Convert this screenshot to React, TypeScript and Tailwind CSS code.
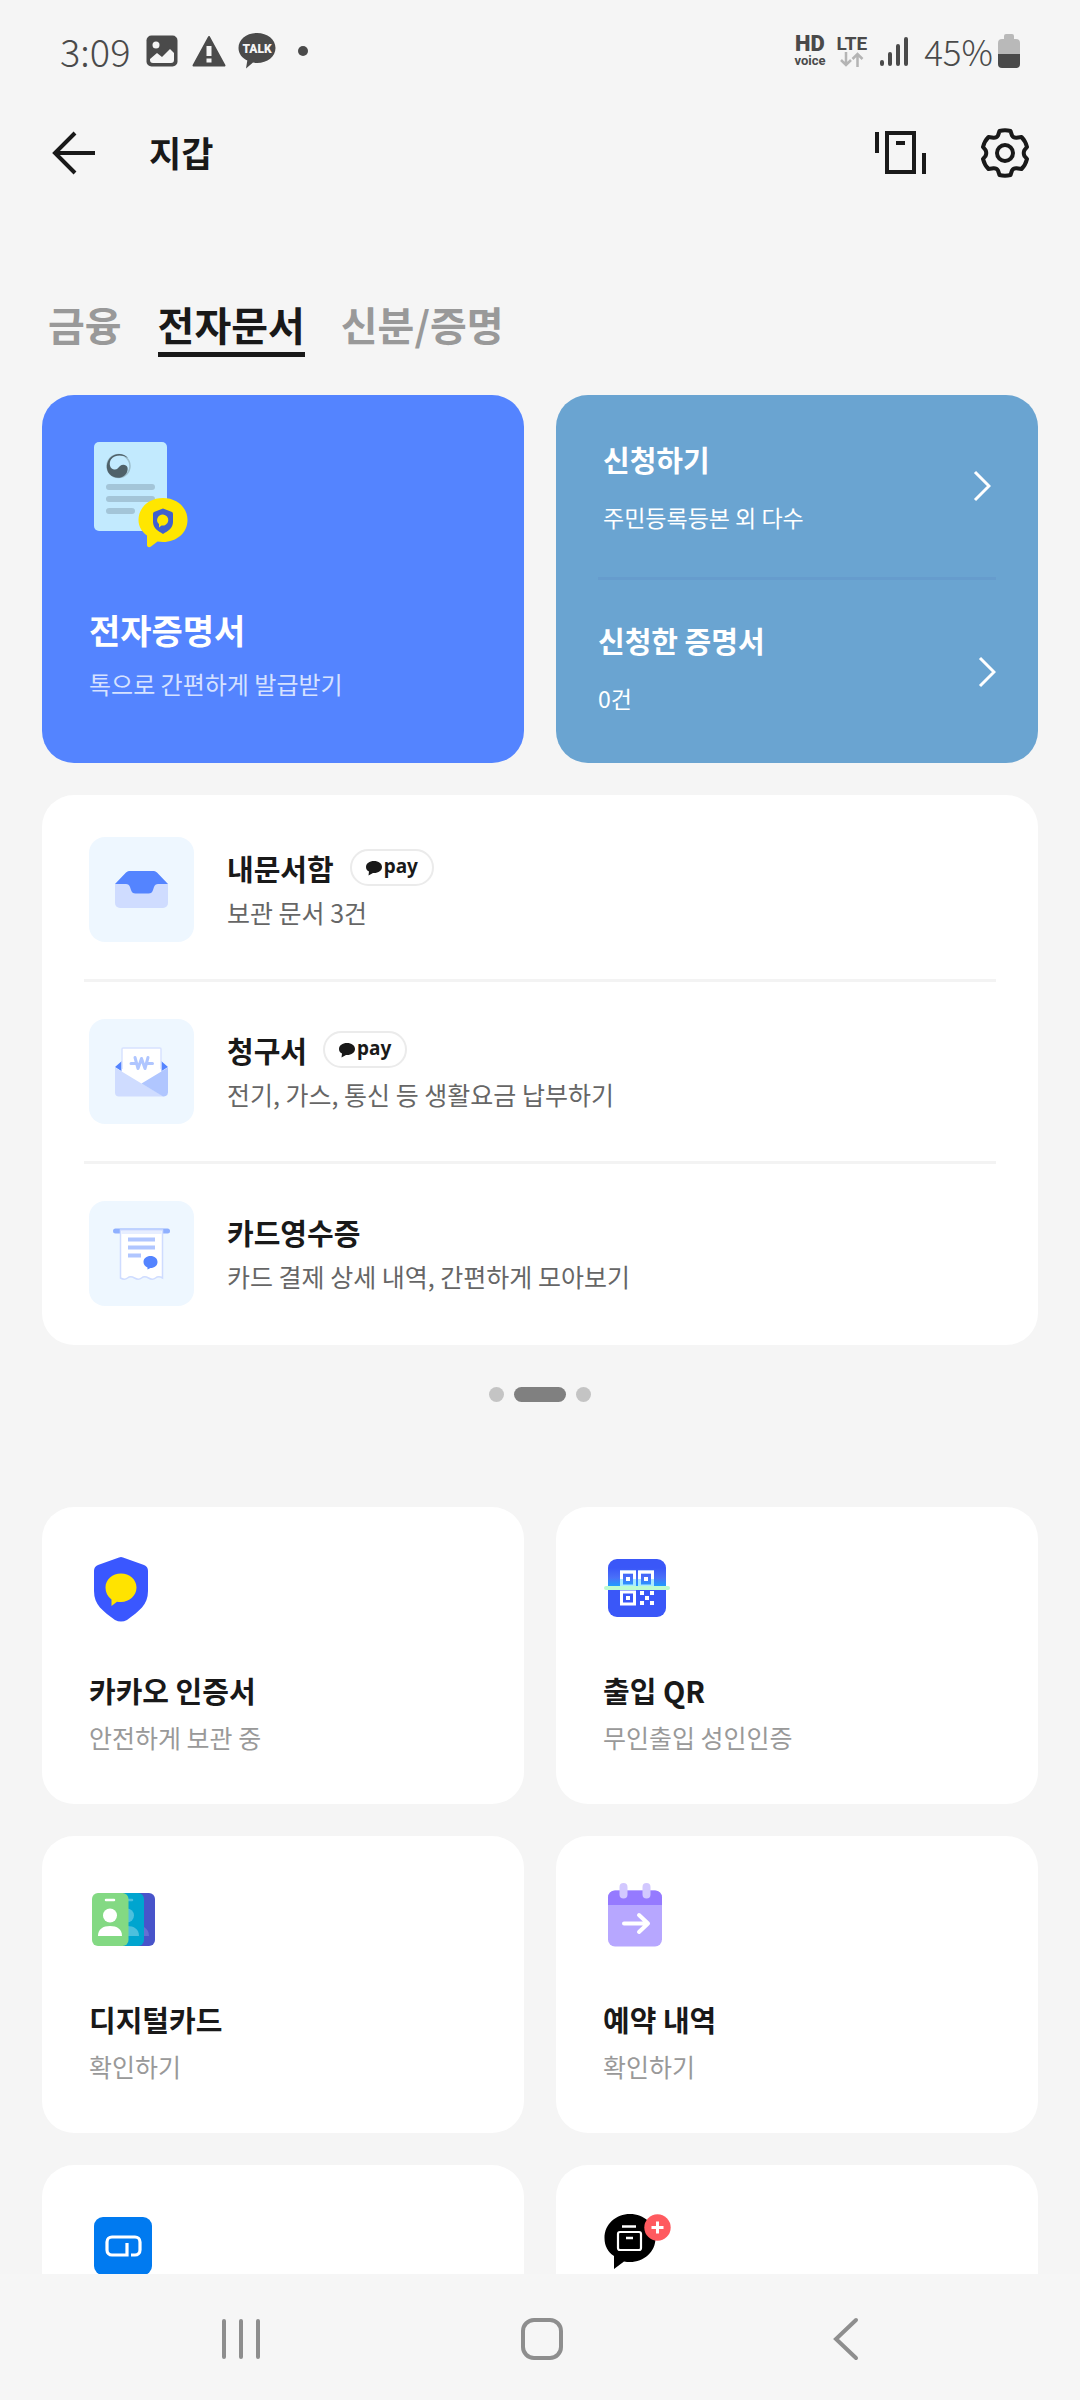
import type { ReactNode } from "react";

function TalkIcon() {
  return (
    <svg width="38" height="38" viewBox="0 0 38 38" aria-hidden="true">
      <path
        d="M19 1C29.500 1 37.500 7.500 37.500 16S29.500 31 19 31c-1.500 0-2.500-.1-4-.4L8 36.500 9.300 28.500C4 26 .5 21.500.5 16 .5 7.500 8.500 1 19 1z"
        fill="#4a4a4a"
      />
      <text
        x="19"
        y="21"
        textAnchor="middle"
        fontFamily="Roboto, sans-serif"
        fontWeight="900"
        fontSize="12"
        fill="#f5f5f5"
      >
        TALK
      </text>
    </svg>
  );
}

function StatusBar() {
  return (
    <div className="flex h-[102px] items-center justify-between pl-[60px] pr-[60px] text-[#4a4a4a]">
      <div className="flex items-center">
        <span className="mr-[15px] text-[38px] leading-[40px] font-light">3:09</span>
        <svg className="mr-[13px]" width="32" height="32" viewBox="0 0 32 32" aria-hidden="true">
          <rect x="0.500" y="0.500" width="31" height="31" rx="5" fill="#4a4a4a" />
          <circle cx="10" cy="10" r="3.500" fill="#f5f5f5" />
          <path d="M4 24l7-6 5 4 8-8 4 4v7a3 3 0 0 1-3 3H7a3 3 0 0 1-3-3z" fill="#f5f5f5" />
        </svg>
        <svg className="mr-[11px]" width="36" height="32" viewBox="0 0 36 32" aria-hidden="true">
          <path d="M18 2L33.500 30.500H2.500z" fill="#4a4a4a" stroke="#4a4a4a" strokeWidth="2" strokeLinejoin="round" />
          <path d="M15.500 11h5v10h-5zM15.500 23.500h5v4h-5z" fill="#f5f5f5" />
        </svg>
        <TalkIcon />
        <span className="ml-[22px] size-[10px] rounded-full bg-[#4a4a4a]" />
      </div>
      <div className="flex items-center">
        <div className="mr-[11px] flex flex-col items-center font-['Roboto']">
          <span className="text-[22px] leading-[19px] font-black">HD</span>
          <span className="text-[13px] leading-[15px] font-bold">voice</span>
        </div>
        <div className="mr-[12px] flex flex-col items-center font-['Roboto']">
          <span className="text-[19px] leading-[17px] font-bold">LTE</span>
          <svg width="24" height="15" viewBox="0 0 24 15" fill="none" stroke="#b4b4b4" strokeWidth="2.500" aria-hidden="true">
            <path d="M6 0v13M1 8l5 5 5-5M17.500 15V2M12.500 7l5-5 5 5" />
          </svg>
        </div>
        <svg className="mr-[15px]" width="30" height="32" viewBox="0 0 30 32" stroke="#4a4a4a" strokeWidth="4" strokeLinecap="round" aria-hidden="true">
          <path d="M3 27v2M11 19v10M19 11v18M27 4v25" />
        </svg>
        <span className="mr-[5px] text-[35px] leading-[40px] font-light">45%</span>
        <svg width="22" height="34" viewBox="0 0 22 34" aria-hidden="true">
          <path d="M6 2a2 2 0 0 1 2-2h6a2 2 0 0 1 2 2v3h2a4 4 0 0 1 4 4v12H0V9a4 4 0 0 1 4-4h2z" fill="#b9b9b9" />
          <path d="M0 20h22v10a4 4 0 0 1-4 4H4a4 4 0 0 1-4-4z" fill="#4a4a4a" />
        </svg>
      </div>
    </div>
  );
}

function Header() {
  return (
    <header className="flex h-[102px] items-center justify-between pl-[48px] pr-[49px] text-[#191919]">
      <div className="flex items-center gap-[51px]">
        <button type="button" aria-label="뒤로">
          <svg width="50" height="50" viewBox="0 0 50 50" fill="none" stroke="#191919" strokeWidth="4">
            <path d="M27 5L7 25l20 20M7 25h40" />
          </svg>
        </button>
        <h1 className="pb-[2px] text-[35px] leading-[48px] font-bold">지갑</h1>
      </div>
      <div className="flex items-center gap-[50px]">
        <button type="button" aria-label="카드">
          <svg width="56" height="50" viewBox="0 0 56 50" fill="none" stroke="#191919" strokeWidth="4">
            <path d="M4 4v21M51 25v21" />
            <rect x="14" y="5" width="27" height="39" />
            <path d="M23 15h9" />
          </svg>
        </button>
        <button type="button" aria-label="설정">
          <svg width="52" height="52" viewBox="0 0 52 52" fill="none" stroke="#191919" strokeWidth="4" strokeLinejoin="round">
            <path d="M20.500 4Q26 2.500 31.500 4L33 8.500Q34.500 11 37.500 10.800L42.500 10Q46.500 14 48 20L45.500 23Q44 26 45.500 29L48 32Q46.500 38 42.500 42L37.500 41.200Q34.500 41 33 43.500L31.500 48Q26 49.500 20.500 48L19 43.500Q17.500 41 14.500 41.200L9.500 42Q5.500 38 4 32L6.500 29Q8 26 6.500 23L4 20Q5.500 14 9.500 10L14.500 10.800Q17.500 11 19 8.500z" />
            <circle cx="26" cy="26" r="8" />
          </svg>
        </button>
      </div>
    </header>
  );
}

const tabs = [
  { label: "금융", active: false },
  { label: "전자문서", active: true },
  { label: "신분/증명", active: false },
];

function Tabs() {
  return (
    <nav className="mt-[92px] flex gap-[36px] pl-[48px] text-[40px] leading-[56px] font-bold">
      {tabs.map((tab) => (
        <button
          key={tab.label}
          type="button"
          className={
            tab.active
              ? "border-b-[5px] border-[#191919] text-[#191919]"
              : "border-b-[5px] border-transparent text-[#999999]"
          }
        >
          {tab.label}
        </button>
      ))}
    </nav>
  );
}

function DocumentIcon() {
  return (
    <svg width="104" height="116" viewBox="1 0 104 116" aria-hidden="true">
      <rect x="6" y="6" width="73" height="89" rx="5" fill="#c2eafe" />
      <circle cx="30.500" cy="30" r="11.500" fill="none" stroke="#9dbfcd" strokeWidth="1.500" />
      <path
        d="M40 22C36 17 28 16.500 23 21c-5 4.500-5.500 12.500-1.500 17 4 4.500 11 5 15 1.500 3-2.500 3.500-6 3-8-1-3-5-3.500-7.500-1.500-2 2-3 4-6 3.500-4-.5-5.500-6-3-10 3-4.500 11-5.500 17-1.500z"
        fill="#4f6169"
      />
      <path d="M21 51h43M21 63h43M21 75h23" stroke="#a3c5d8" strokeWidth="6" strokeLinecap="round" />
      <path
        d="M75 62c14 0 24.500 9.500 24.500 22S89 106 75 106c-2 0-4-.2-5.500-.5L63 110.500c-2 1.500-4 .5-4-1.500V99.500c-5.500-4-8.500-9.500-8.500-15.500C50.500 71.500 61 62 75 62z"
        fill="#ffe600"
      />
      <path d="M75 72.500l9 3.500q1 .5 1 1.500V86c0 6-5 9-10 12-5-3-10-6-10-12v-8.500q0-1 1-1.500z" fill="#4060cf" />
      <path d="M75 78.500a6 5.500 0 1 1-1.500 11L71 91.500V88a6 5.500 0 0 1 4-9.500z" fill="#ffe600" />
    </svg>
  );
}

function Chevron() {
  return (
    <svg width="18" height="32" viewBox="0 0 18 32" fill="none" stroke="#ffffff" strokeWidth="3" aria-hidden="true">
      <path d="M2 2l14 14L2 30" />
    </svg>
  );
}

function CertificateCards() {
  return (
    <section className="mt-[38px] grid grid-cols-2 gap-[32px] text-white">
      <a href="#certificate" className="flex flex-col rounded-[32px] bg-[#5484ff] px-[47px] pt-[41px] pb-[62px]">
        <DocumentIcon />
        <strong className="mt-[56px] text-[34px] leading-[44px]">전자증명서</strong>
        <span className="mt-[15px] text-[24px] leading-[34px] text-[#d6e2ff]">톡으로 간편하게 발급받기</span>
      </a>
      <div className="flex flex-col rounded-[32px] bg-[#6aa4d1] px-[42px]">
        <a href="#apply" className="flex h-[185px] items-center justify-between border-b-[3px] border-[#669ccd] px-[5px]">
          <span className="flex flex-col pt-[2px]">
            <strong className="text-[29px] leading-[38px]">신청하기</strong>
            <span className="mt-[22px] text-[23px] leading-[34px]">주민등록등본 외 다수</span>
          </span>
          <Chevron />
        </a>
        <a href="#applied" className="flex flex-1 items-center justify-between">
          <span className="flex flex-col pb-[8px]">
            <strong className="text-[29px] leading-[38px]">신청한 증명서</strong>
            <span className="mt-[22px] text-[23px] leading-[34px]">0건</span>
          </span>
          <Chevron />
        </a>
      </div>
    </section>
  );
}

function InboxIcon() {
  return (
    <svg viewBox="0 0 105 105" className="size-full">
      <path d="M26 47h53v19a5 5 0 0 1-5 5H31a5 5 0 0 1-5-5z" fill="#cfdcff" />
      <path d="M37 35.500q1.500-1.500 3-1.500h25q1.500 0 3 1.500L79 47H69q-3 0-4 3l-1 3q-1 3.500-4.500 3.500h-13Q43 56.500 42 53l-1-3q-1-3-4-3H26z" fill="#5484ff" />
    </svg>
  );
}

function BillIcon() {
  return (
    <svg viewBox="0 0 105 105" className="size-full">
      <path d="M26 48l8-7v12zM79 48l-8-7v12z" fill="#5484ff" />
      <path d="M34 29h37a1 1 0 0 1 1 1v30H33V30a1 1 0 0 1 1-1z" fill="#fff" stroke="#d8e2ff" strokeWidth="1.500" />
      <path d="M33 50h39v5L52.500 66 33 55z" fill="#fff" />
      <path d="M26 48.500L52.500 64.500 75 77.500H30a4 4 0 0 1-4-4z" fill="#cfdcff" />
      <path d="M79 48.500v25a4 4 0 0 1-6.500 3L52.500 64.500z" fill="#b0c6ff" />
      <path d="M46 38.500l3 11 3.500-10 3.500 10 3-11M42 44.500h5M58.500 44.500h5" fill="none" stroke="#b0c6ff" strokeWidth="3" strokeLinecap="round" strokeLinejoin="round" />
    </svg>
  );
}

function ReceiptIcon() {
  return (
    <svg viewBox="0 0 105 105" className="size-full">
      <path d="M26.500 30h52" stroke="#8fb0ff" strokeWidth="5" strokeLinecap="round" />
      <path d="M31.500 29h42v48q-4-2.500-7 0t-7 0-7 0-7 0-7 0-7 0z" fill="#fff" stroke="#cfdcff" strokeWidth="1.500" />
      <path d="M32.500 30h40v3h-40z" fill="#e7eeff" />
      <path d="M39 38.500h27M39 46.500h27M39 54.500h13" stroke="#b0c6ff" strokeWidth="4" />
      <path d="M61.500 55c4 0 7 2.500 7 6s-3 6-7 6l-3 1.500V66.500c-2.500-1-4-3-4-5.500 0-3.500 3-6 7-6z" fill="#5484ff" />
    </svg>
  );
}

function PayBadge() {
  return (
    <span className="flex h-[37px] items-center gap-[2px] rounded-full border-2 border-[#ebebeb] px-[14px]">
      <svg width="16" height="16" viewBox="0 0 16 16" aria-hidden="true">
        <path d="M8 1c4.500 0 8 2.500 8 6s-3.500 6-8 6H7l-4.500 2.500L3 11.500C1 10.500 0 9 0 7c0-3.500 3.500-6 8-6z" fill="#191919" />
      </svg>
      <span className="pb-[3px] font-['Noto_Sans'] text-[19px] leading-[24px] font-bold text-[#191919]">pay</span>
    </span>
  );
}

const documents = [
  { title: "내문서함", description: "보관 문서 3건", pay: true, icon: <InboxIcon /> },
  { title: "청구서", description: "전기, 가스, 통신 등 생활요금 납부하기", pay: true, icon: <BillIcon /> },
  { title: "카드영수증", description: "카드 결제 상세 내역, 간편하게 모아보기", pay: false, icon: <ReceiptIcon /> },
];

function DocumentList() {
  return (
    <ul className="mt-[32px] rounded-[32px] bg-white px-[42px] pt-[5px] pb-[2px]">
      {documents.map((item) => (
        <li key={item.title} className="border-b-[3px] border-[#f3f3f3] last:border-b-0">
          <a href="#documents" className="flex h-[179px] items-center gap-[33px] px-[5px]">
            <span className="size-[105px] rounded-[16px] bg-[#eef7ff]">{item.icon}</span>
            <span className="flex flex-col pb-[3px]">
              <span className="flex h-[42px] items-center gap-[16px]">
                <strong className="text-[29px] leading-[42px] text-[#191919]">{item.title}</strong>
                {item.pay && <PayBadge />}
              </span>
              <span className="mt-[5px] text-[25px] leading-[36px] text-[#666666]">{item.description}</span>
            </span>
          </a>
        </li>
      ))}
    </ul>
  );
}

function PageDots() {
  return (
    <div className="mt-[42px] flex justify-center gap-[10px]">
      <span className="size-[15px] rounded-full bg-[#c4c4c4]" />
      <span className="h-[15px] w-[52px] rounded-full bg-[#808080]" />
      <span className="size-[15px] rounded-full bg-[#c4c4c4]" />
    </div>
  );
}

function ShieldIcon() {
  return (
    <>
      <path d="M31 7.500q2-1 4 0l21 7.500q4 1.500 4 6v20c0 14-9 20-21 29q-6 3-12 0C15 61 6 55 6 41V21q0-4.500 4-6z" fill="#3a57ff" />
      <path d="M33 23.500c8.500 0 15.500 6 15.500 14s-7 14.500-15.500 14.500q-2.500 0-4-.3L23.500 56v-6.500c-4-3-6-7-6-12 0-8 7-14 15.500-14z" fill="#ffe300" />
    </>
  );
}

function QrIcon() {
  return (
    <>
      <defs>
        <linearGradient id="scan" x1="0" y1="0" x2="0" y2="1">
          <stop offset="0" stopColor="#3a57f8" />
          <stop offset="0.550" stopColor="#4a70f8" />
          <stop offset="1" stopColor="#1f9dff" />
        </linearGradient>
      </defs>
      <rect x="6" y="9" width="58" height="58" rx="9" fill="#3a57f8" />
      <path d="M6 18h58v18H6z" fill="url(#scan)" />
      <path d="M19.500 22h13v14h-13zM37.500 22h13v14h-13z" fill="none" stroke="#a9eaff" strokeWidth="3" />
      <path d="M19.500 29v-7h13v7M37.500 29v-7h13v7" fill="none" stroke="#fff" strokeWidth="3" />
      <path d="M19.500 42h13v12h-13z" fill="none" stroke="#fff" strokeWidth="3" />
      <path d="M24 27h4v4h-4zM42 27h4v4h-4zM24 46h4v4h-4zM38 41h4v4h-4zM48 41h4v4h-4zM43 46h4v4h-4zM38 51h4v4h-4zM48 51h4v4h-4z" fill="#fff" />
      <path d="M4 38h62" stroke="#bdfcd0" strokeWidth="4" strokeLinecap="round" />
    </>
  );
}

function DigitalCardIcon() {
  return (
    <>
      <rect x="30" y="14" width="37" height="53" rx="6" fill="#4854ca" />
      <path d="M56 48q5 3 5 9h-5z" fill="#6570d3" />
      <rect x="20" y="14" width="36" height="53" rx="6" fill="#00a5cf" />
      <path d="M38 21h6" stroke="#4dc0dd" strokeWidth="2.500" strokeLinecap="round" />
      <circle cx="39" cy="36.500" r="7" fill="#4dc0dd" />
      <path d="M27 57c0-7 5-10 12-10s12 3 12 10z" fill="#4dc0dd" />
      <rect x="4" y="14" width="36.500" height="53" rx="6" fill="#83d983" />
      <path d="M18 21h8" stroke="#fff" strokeWidth="2.500" strokeLinecap="round" />
      <circle cx="22" cy="36.500" r="7" fill="#fff" />
      <path d="M10 57c0-7 5-10 12-10s12 3 12 10z" fill="#fff" />
    </>
  );
}

function CalendarIcon() {
  return (
    <>
      <rect x="6" y="11.500" width="54" height="56" rx="7" fill="#b7a7ff" />
      <path d="M13 11.500h40a7 7 0 0 1 7 7V26H6v-7.500a7 7 0 0 1 7-7z" fill="#957aff" />
      <path d="M21.500 8v7.500M44.500 8v7.500" stroke="#d2c8ff" strokeWidth="8" strokeLinecap="round" />
      <path d="M22 44.500h24M37 36l9 8.500-9 8.500" fill="none" stroke="#fff" strokeWidth="4" strokeLinecap="round" strokeLinejoin="round" />
    </>
  );
}

function MembershipIcon() {
  return (
    <>
      <rect x="6" y="9" width="58" height="58" rx="9" fill="#007af0" />
      <path d="M39 35v12H24a5 5 0 0 1-5-5v-8a5 5 0 0 1 5-5h23a5 5 0 0 1 5 5v8a5 5 0 0 1-5 5h-4" fill="none" stroke="#fff" strokeWidth="3.200" />
    </>
  );
}

function TalkBoxIcon() {
  return (
    <>
      <path d="M28 6c14 0 25.500 10 25.500 24S42 54 28 54q-3 0-6-.6L12 61V48C6 44 2.500 38 2.500 30 2.500 16 14 6 28 6z" fill="#000" />
      <path d="M20 18.500h14" stroke="#fff" strokeWidth="2.500" />
      <rect x="16" y="24" width="23" height="18" rx="2" fill="none" stroke="#fff" strokeWidth="2.200" />
      <path d="M24 30h7" stroke="#fff" strokeWidth="2.500" />
      <circle cx="55.500" cy="19.500" r="13.200" fill="#ff5a5f" />
      <path d="M49.500 19.500h12M55.500 13.500v12" stroke="#fff" strokeWidth="3" />
    </>
  );
}

type Service = {
  id: string;
  title: string;
  description: string;
  icon: ReactNode;
};

const services: Service[] = [
  { id: "cert", title: "카카오 인증서", description: "안전하게 보관 중", icon: <ShieldIcon /> },
  { id: "qr", title: "출입 QR", description: "무인출입 성인인증", icon: <QrIcon /> },
  { id: "card", title: "디지털카드", description: "확인하기", icon: <DigitalCardIcon /> },
  { id: "booking", title: "예약 내역", description: "확인하기", icon: <CalendarIcon /> },
  { id: "membership", title: "", description: "", icon: <MembershipIcon /> },
  { id: "box", title: "", description: "", icon: <TalkBoxIcon /> },
];

function ServiceGrid() {
  return (
    <section className="mt-[105px] grid grid-cols-2 gap-[32px]">
      {services.map((service) => (
        <a
          key={service.id}
          href={`#${service.id}`}
          className="flex min-h-[297px] flex-col rounded-[32px] bg-white px-[47px] pt-[43px]"
        >
          <svg width="72" height="76" viewBox="1 0 72 76" aria-hidden="true">
            {service.icon}
          </svg>
          <strong className="mt-[43px] text-[29px] leading-[42px] text-[#191919]">{service.title}</strong>
          <span className="mt-[8px] text-[25px] leading-[36px] text-[#999999]">{service.description}</span>
        </a>
      ))}
    </section>
  );
}

function NavigationBar() {
  return (
    <nav className="flex h-[126px] shrink-0 items-center justify-between bg-[#f6f6f6] pt-[3px] pl-[216px] pr-[212px]">
      <button type="button" aria-label="최근 앱">
        <svg width="50" height="50" viewBox="0 0 50 50" stroke="#8e8e8e" strokeWidth="4" strokeLinecap="round">
          <path d="M8 7v36M25 7v36M42 7v36" />
        </svg>
      </button>
      <button type="button" aria-label="홈">
        <svg width="50" height="50" viewBox="0 0 50 50" fill="none" stroke="#8e8e8e" strokeWidth="4">
          <rect x="6" y="6" width="38" height="38" rx="11" />
        </svg>
      </button>
      <button type="button" aria-label="이전">
        <svg width="50" height="50" viewBox="0 0 50 50" fill="none" stroke="#8e8e8e" strokeWidth="4" strokeLinecap="round">
          <path d="M38 6L18 25l20 19" />
        </svg>
      </button>
    </nav>
  );
}

export default function App() {
  return (
    <div className="flex h-screen flex-col bg-[#f5f5f5] font-['Noto_Sans_CJK_KR',sans-serif]">
      <StatusBar />
      <Header />
      <main className="min-h-0 flex-1 overflow-hidden">
        <Tabs />
        <div className="px-[42px]">
          <CertificateCards />
          <DocumentList />
          <PageDots />
          <ServiceGrid />
        </div>
      </main>
      <NavigationBar />
    </div>
  );
}
